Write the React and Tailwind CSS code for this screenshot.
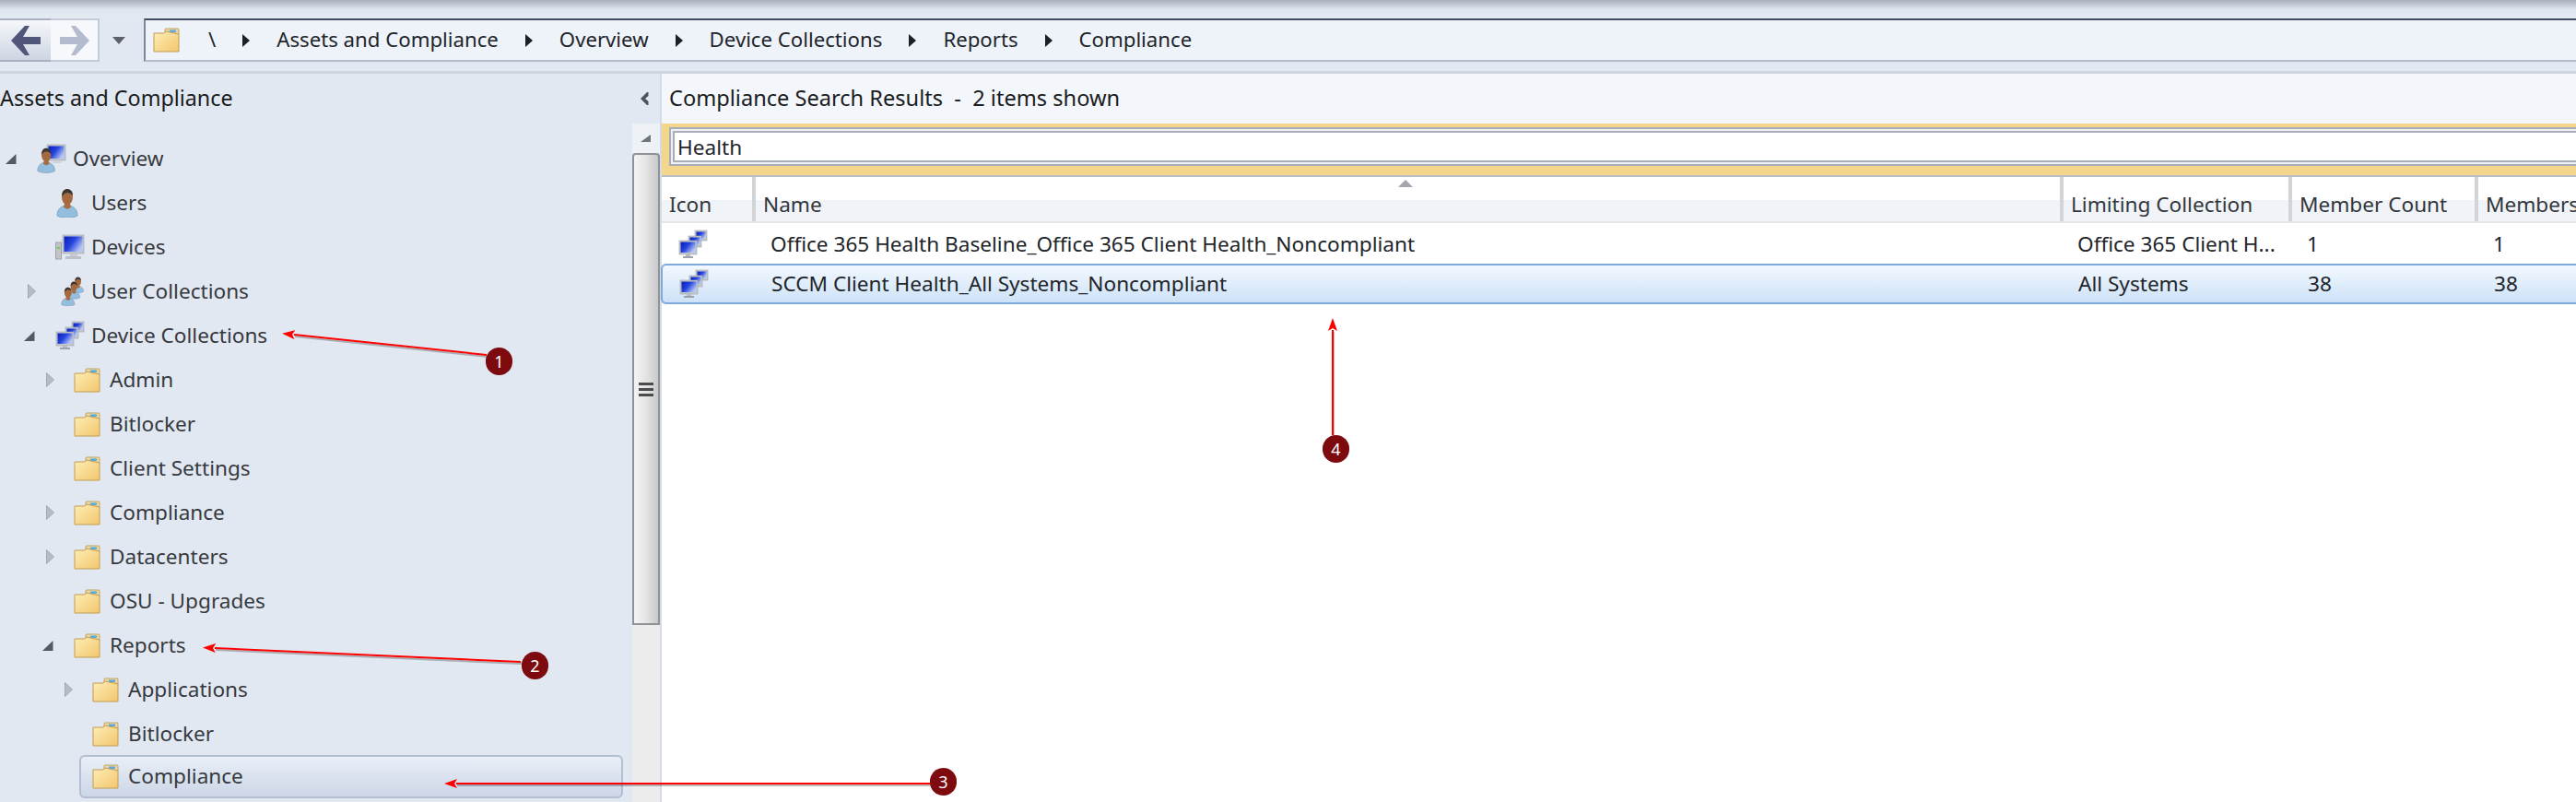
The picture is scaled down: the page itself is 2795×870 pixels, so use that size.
import { useId } from 'react'

function Folder() {
  const id = useId()
  return (
    <svg width="29" height="27" viewBox="0 0 29 27" className="shrink-0">
      <defs>
        <linearGradient id={id} x1="0" y1="0" x2="1" y2="1">
          <stop offset="0" stopColor="#fdeeb6" />
          <stop offset="1" stopColor="#f3c56d" />
        </linearGradient>
      </defs>
      <path d="M14 1h13a1 1 0 0 1 1 1v6H13V2a1 1 0 0 1 1-1z" fill="#e9d6a4" stroke="#c5a565" />
      <rect x="18" y="2.500" width="7" height="2.500" fill="#5fa8e0" />
      <path d="M1 6h11l2-2 14 3v19H1z" fill={`url(#${id})`} stroke="#bf9c55" />
    </svg>
  )
}

function Monitor({ x, y, w, h, id }) {
  return (
    <g>
      <rect x={x} y={y} width={w} height={h} fill="#c4c7ce" stroke="#9da1a9" strokeWidth="0.6" />
      <rect x={x + 1.5} y={y + 1.5} width={w - 3} height={h - 3.5} fill={`url(#${id})`} />
    </g>
  )
}

function ScreenGradient({ id }) {
  return (
    <linearGradient id={id} x1="0" y1="0" x2="1" y2="0.6">
      <stop offset="0" stopColor="#0a1db5" />
      <stop offset="0.5" stopColor="#2443dd" />
      <stop offset="1" stopColor="#b5c6f5" />
    </linearGradient>
  )
}

function DeviceCollectionIcon() {
  const id = useId()
  return (
    <svg width="32" height="32" viewBox="0 0 32 32" className="shrink-0">
      <defs><ScreenGradient id={id} /></defs>
      <Monitor x={18} y={1} w={13} h={11} id={id} />
      <Monitor x={11} y={7} w={14} h={12} id={id} />
      <Monitor x={1} y={12} w={19} h={15} id={id} />
      <rect x="8" y="27" width="5" height="2" fill="#b7bbc2" />
      <rect x="5" y="29" width="11" height="2" fill="#9da1a9" />
    </svg>
  )
}

function DeviceIcon() {
  const id = useId()
  return (
    <svg width="32" height="28" viewBox="0 0 32 28" className="shrink-0">
      <defs><ScreenGradient id={id} /></defs>
      <rect x="0.5" y="9" width="6" height="18" fill="#c2c4c8" stroke="#9ea2a8" />
      <rect x="2" y="14" width="3" height="2" fill="#65d24c" />
      <Monitor x={8} y={1} w={23} h={20} id={id} />
      <rect x="16" y="21" width="8" height="3" fill="#c7cad0" />
      <rect x="11" y="24" width="17" height="3" fill="#bcc0c7" />
    </svg>
  )
}

function Person({ x, y, s = 1 }) {
  return (
    <g transform={`translate(${x} ${y}) scale(${s})`}>
      <path d="M1 30c0-7 4-11 11-11s11 4 11 11c-5 3-17 3-22 0z" fill="#93bedd" stroke="#6f96b5" strokeWidth="0.7" />
      <path d="M9 17h6l1 4-4 2-4-2z" fill="#a86d45" />
      <ellipse cx="12" cy="10" rx="6" ry="8" fill="#a5693f" />
      <path d="M6 9c0-6 3-8 6-8s6 2 6 7c-2-2-4-3-6-3s-4 2-6 4z" fill="#3c3632" />
    </g>
  )
}

function UserIcon() {
  return (
    <svg width="26" height="32" viewBox="0 0 24 32" className="shrink-0">
      <Person x={0} y={0} />
    </svg>
  )
}

function UserCollectionIcon() {
  return (
    <svg width="26" height="32" viewBox="0 0 26 32" className="ml-[6px] shrink-0">
      <Person x={12} y={0} s={0.55} />
      <Person x={7} y={5} s={0.6} />
      <Person x={0} y={11} s={0.65} />
    </svg>
  )
}

function OverviewIcon() {
  const id = useId()
  return (
    <svg width="32" height="32" viewBox="0 0 32 32" className="shrink-0">
      <defs><ScreenGradient id={id} /></defs>
      <Monitor x={11} y={1} w={20} h={17} id={id} />
      <rect x="17" y="18" width="10" height="3" fill="#d0d3d9" />
      <Person x={0} y={4} s={0.85} />
    </svg>
  )
}

function Expanded() {
  return (
    <svg width="12" height="11" viewBox="0 0 12 11">
      <path d="M11.500 0v11H0z" fill="#555a60" />
    </svg>
  )
}

function Collapsed() {
  return (
    <svg width="9" height="16" viewBox="0 0 9 16">
      <path d="M0.500 0.500 8.500 8l-8 7.500z" fill="#b6bcc5" stroke="#a2a9b3" />
    </svg>
  )
}

const treeRows = [
  { label: 'Overview', depth: 0, arrow: 'open', icon: <OverviewIcon /> },
  { label: 'Users', depth: 1, icon: <UserIcon /> },
  { label: 'Devices', depth: 1, icon: <DeviceIcon /> },
  { label: 'User Collections', depth: 1, arrow: 'closed', icon: <UserCollectionIcon /> },
  { label: 'Device Collections', depth: 1, arrow: 'open', icon: <DeviceCollectionIcon /> },
  { label: 'Admin', depth: 2, arrow: 'closed', icon: <Folder /> },
  { label: 'Bitlocker', depth: 2, icon: <Folder /> },
  { label: 'Client Settings', depth: 2, icon: <Folder /> },
  { label: 'Compliance', depth: 2, arrow: 'closed', icon: <Folder /> },
  { label: 'Datacenters', depth: 2, arrow: 'closed', icon: <Folder /> },
  { label: 'OSU - Upgrades', depth: 2, icon: <Folder /> },
  { label: 'Reports', depth: 2, arrow: 'open', icon: <Folder /> },
  { label: 'Applications', depth: 3, arrow: 'closed', icon: <Folder /> },
  { label: 'Bitlocker', depth: 3, icon: <Folder /> },
  { label: 'Compliance', depth: 3, icon: <Folder />, selected: true },
]

const indents = ['w-[28px]', 'w-[48px]', 'w-[68px]', 'w-[88px]']

function TreeRow({ row }) {
  return (
    <div className="flex h-12 items-center">
      <div className={`${indents[row.depth]} flex shrink-0 items-center justify-end ${row.arrow === 'open' ? 'pr-[10px]' : 'pr-[9px]'}`}>
        {row.arrow === 'open' && <Expanded />}
        {row.arrow === 'closed' && <Collapsed />}
      </div>
      <div
        className={`flex h-[47px] flex-1 items-center pl-3 ${
          row.selected
            ? 'rounded-md border-2 border-[#b4bed2] bg-gradient-to-b from-[#e9eff8] to-[#ccd6e6] -ml-[2px] -mt-1'
            : ''
        }`}
      >
        <div className="flex w-[39px] shrink-0 items-center">{row.icon}</div>
        <span className="text-[#36393e]">{row.label}</span>
      </div>
    </div>
  )
}

function Crumb() {
  return (
    <svg width="8" height="14" viewBox="0 0 8 14" className="shrink-0">
      <path d="M0 0l8 7-8 7z" fill="#1d1f24" />
    </svg>
  )
}

const columns = 'grid grid-cols-[100px_1417px_249px_202px_1fr]'

function ResultRow({ limiting, name, count, selected }) {
  return (
    <div
      className={`${columns} h-[44px] items-center ${
        selected
          ? 'rounded-l-md border-y-2 border-l-2 border-[#7da9db] bg-gradient-to-b from-[#f2f8fe] to-[#cde2f7] -ml-[1px]'
          : 'pt-[2px]'
      }`}
    >
      <div className="pl-[18px]"><DeviceCollectionIcon /></div>
      <div className="pl-[18px] whitespace-nowrap">{name}</div>
      <div className="pl-[19px] whitespace-nowrap">{limiting}</div>
      <div className="pl-[19px]">{count}</div>
      <div className="pl-[19px]">{count}</div>
    </div>
  )
}

function HeaderCell({ label, last, sorted }) {
  return (
    <div
      className={`relative flex h-full items-end bg-[linear-gradient(to_bottom,#ffffff_52%,#f0f4f8_52%)] pb-[6px] pl-[8px] whitespace-nowrap text-[#33363a] ${
        last ? '' : 'border-r-4 border-[#d3d4d6]'
      }`}
    >
      {sorted && (
        <svg width="16" height="8" viewBox="0 0 16 8" className="absolute left-[697px] top-[3px]">
          <path d="M8 0l8 8H0z" fill="#a4a8ae" />
        </svg>
      )}
      {label}
    </div>
  )
}

function Badge({ n, className }) {
  return (
    <div className={`absolute flex h-[30px] w-[29px] items-center justify-center rounded-full bg-[#7c0a0e] text-[18px] text-white ${className}`}>
      {n}
    </div>
  )
}

// callouts drawn on top of the screenshot
function Callouts() {
  const arrows = [
    { x1: 528, y1: 385, x2: 319, y2: 363 },
    { x1: 565, y1: 718, x2: 233, y2: 703 },
    { x1: 1010, y1: 850, x2: 495, y2: 850 },
    { x1: 1446, y1: 472, x2: 1446, y2: 358 },
  ]
  return (
    <div className="pointer-events-none absolute inset-0">
      <svg width="2795" height="870" className="absolute left-0 top-0">
        <defs>
          <marker id="head" markerWidth="15" markerHeight="10" refX="1" refY="5" orient="auto" markerUnits="userSpaceOnUse">
            <path d="M0 0l14 5-14 5 3-5z" fill="#f00" />
          </marker>
        </defs>
        {arrows.map((a) => (
          <g key={a.x1}>
            <line x1={a.x1 + 1} y1={a.y1 + 2} x2={a.x2 + 1} y2={a.y2 + 2} stroke="#000" strokeOpacity="0.25" strokeWidth="2" />
            <line x1={a.x1} y1={a.y1} x2={a.x2} y2={a.y2} stroke="#f00" strokeWidth="2" markerEnd="url(#head)" />
          </g>
        ))}
      </svg>
      <Badge n="1" className="left-[527px] top-[377px]" />
      <Badge n="2" className="left-[566px] top-[707px]" />
      <Badge n="3" className="left-[1009px] top-[833px]" />
      <Badge n="4" className="left-[1435px] top-[472px]" />
    </div>
  )
}

export default function App() {
  return (
    <div className="relative h-[870px] w-[2795px] overflow-hidden bg-[#e2e8f1] font-['Noto_Sans',sans-serif] text-[22.6px] leading-none text-[#222529]">
      <div className="h-[20px] bg-gradient-to-b from-[#a7afba] via-[#dfe5ed] to-[#e4eaf2]" />

      {/* toolbar */}
      <div className="flex h-[47px] items-stretch">
        <div className="flex w-[55px] items-center justify-center border-y-2 border-y-[#a9b0bf] bg-gradient-to-b from-[#f5f7fb] to-[#ced5e2]">
          <svg width="32" height="32" viewBox="0 0 32 32">
            <path d="M15 0 0 16l15 16h5l-7-12h19v-8H13l7-12z" fill="#50567a" />
          </svg>
        </div>
        <div className="flex w-[53px] items-center justify-center border-y-2 border-r-2 border-[#c4cbd7] bg-[#f6f8fc]">
          <svg width="32" height="32" viewBox="0 0 32 32">
            <path d="M17 0l15 16-15 16h-5l7-12H0v-8h19L12 0z" fill="#b3bbce" />
          </svg>
        </div>
        <div className="flex w-[48px] items-center justify-center pr-[6px]">
          <svg width="14" height="8" viewBox="0 0 14 8">
            <path d="M0 0h14L7 8z" fill="#5d6066" />
          </svg>
        </div>
        <div className="flex flex-1 items-center gap-[29px] border-y-2 border-l-2 border-t-[#3f4b5e] border-b-[#b3bbc8] border-l-[#7d8898] bg-[#eef3fa] pl-[8px] text-[22.2px]">
          <div className="mr-[2px]"><Folder /></div>
          <span>\</span>
          <Crumb />
          <span>Assets and Compliance</span>
          <Crumb />
          <span>Overview</span>
          <Crumb />
          <span>Device Collections</span>
          <Crumb />
          <span>Reports</span>
          <Crumb />
          <span>Compliance</span>
        </div>
      </div>

      <div className="mt-[10px] h-[3px] bg-[#ced5df]" />

      <div className="flex h-[790px]">
        {/* left navigation */}
        <div className="flex w-[716px] shrink-0 flex-col">
          <div className="flex h-[54px] shrink-0 items-center justify-between pr-[12px] text-[23.3px] text-[#1a1c20]">
            <span>Assets and Compliance</span>
            <svg width="10" height="14" viewBox="0 0 10 14">
              <path d="M8 0 1 7l7 7h1.500V10L6 7l3.500-3V0z" fill="#4e535b" />
            </svg>
          </div>
          <div className="flex min-h-0 flex-1">
            <div className="w-[686px] shrink-0 pt-[14px] pr-[10px]">
              {treeRows.map((row, i) => (
                <TreeRow key={i} row={row} />
              ))}
            </div>
            {/* scrollbar */}
            <div className="flex flex-1 flex-col bg-[#e8ebf0]">
              <div className="flex h-[32px] shrink-0 items-center justify-center bg-[#eef1f5]">
                <svg width="12" height="8" viewBox="0 0 12 8">
                  <path d="M11 0v8H0z" fill="#70747b" />
                </svg>
              </div>
              <div className="flex h-[512px] shrink-0 items-center justify-center rounded-t-sm border-2 border-[#8f9297] bg-gradient-to-r from-[#f4f4f4] via-[#e4e4e4] to-[#c9c9c9]">
                <div className="flex w-[16px] flex-col gap-[3px]">
                  <div className="h-[3px] bg-[#4a4c50]" />
                  <div className="h-[3px] bg-[#4a4c50]" />
                  <div className="h-[3px] bg-[#4a4c50]" />
                </div>
              </div>
              <div className="flex-1 bg-[#ececec]" />
            </div>
          </div>
        </div>

        {/* results pane */}
        <div className="flex min-w-0 flex-1 flex-col border-l-2 border-[#d5dbe5] bg-white">
          <div className="flex h-[54px] shrink-0 items-center bg-[#f3f7fc] pl-[8px] text-[23.6px] text-[#1a1c20]">
            Compliance Search Results&nbsp; -&nbsp; 2 items shown
          </div>
          <div className="h-[56px] shrink-0 bg-[#f3d58c] py-[4px] pl-[8px]">
            <div className="h-[42px] border-2 border-r-0 border-[#a9adb5] bg-[#eef0f3] py-[2px] pl-[2px]">
              <div className="flex h-[34px] items-center border-2 border-r-0 border-[#a9adb5] bg-white pl-[3px] pt-[2px] text-[#222529]">
                Health
              </div>
            </div>
          </div>
          <div className="grid h-[52px] shrink-0 grid-cols-[102px_1419px_248px_202px_1fr] border-y-2 border-t-[#b9bdc5] border-b-[#e6e6e6] bg-white">
            <HeaderCell label="Icon" />
            <HeaderCell label="Name" sorted />
            <HeaderCell label="Limiting Collection" />
            <HeaderCell label="Member Count" />
            <HeaderCell label="Members" last />
          </div>
          <ResultRow
            name="Office 365 Health Baseline_Office 365 Client Health_Noncompliant"
            limiting="Office 365 Client H..."
            count="1"
          />
          <ResultRow
            name="SCCM Client Health_All Systems_Noncompliant"
            limiting="All Systems"
            count="38"
            selected
          />
        </div>
      </div>

      <Callouts />
    </div>
  )
}
